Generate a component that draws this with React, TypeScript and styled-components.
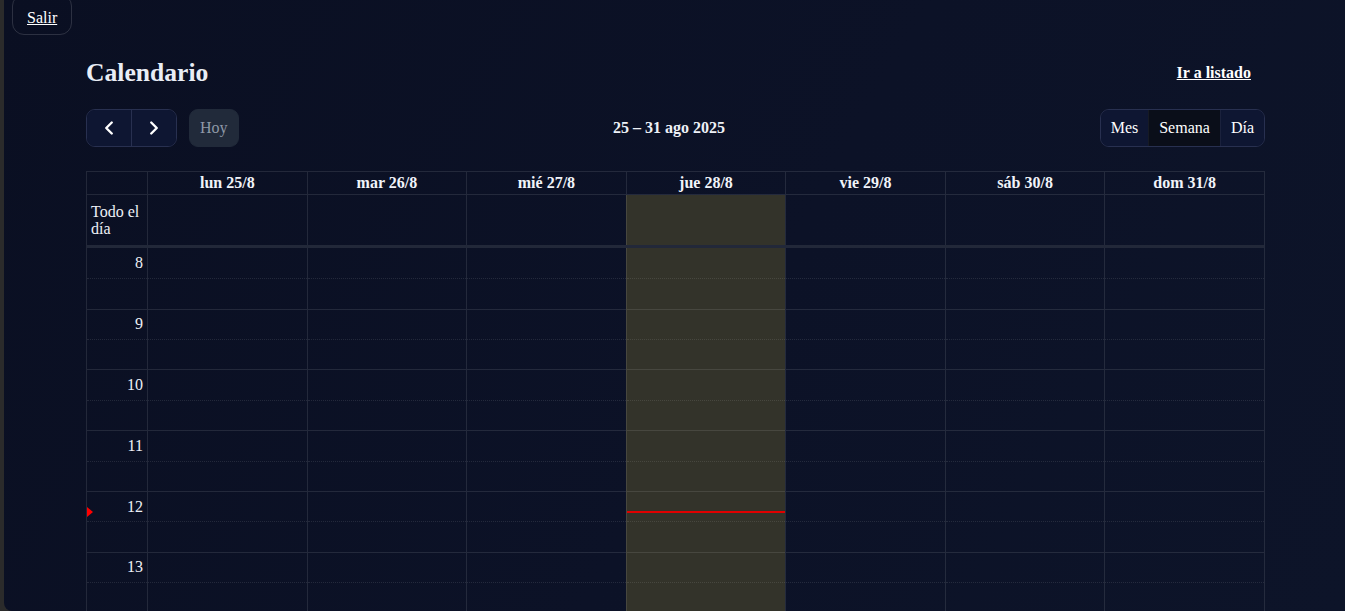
import React from 'react';
import styled, { createGlobalStyle } from 'styled-components';
import { ChevronLeft, ChevronRight } from 'lucide-react';

const LINE = 'rgba(255,255,255,0.1)';

const GlobalStyle = createGlobalStyle`
  html, body { margin: 0; padding: 0; height: 100%; overflow: hidden; background: #2b2b2b; }
  body { font-family: "Liberation Serif", "Times New Roman", serif; color: #eef1f7; }
  * { box-sizing: border-box; }
`;

const Shell = styled.div`
  margin-left: 4px;
  height: 611px;
  overflow: hidden;
  border-bottom-left-radius: 8px;
  background: linear-gradient(120deg, #0a0f22 0%, #0c1227 55%, #0d1429 100%);
  display: flex;
  flex-direction: column;
`;

const ExitButton = styled.a`
  align-self: flex-start;
  margin: -6px 0 0 8px;
  height: 41px;
  padding: 0 14px 7px;
  display: inline-flex;
  align-items: flex-end;
  border: 1px solid rgba(255, 255, 255, 0.14);
  border-radius: 12px;
  color: #ffffff;
  text-decoration: underline;
  font-size: 16px;
  line-height: 18px;
  cursor: pointer;
`;

const Main = styled.main`
  flex: 1;
  min-height: 0;
  display: flex;
  flex-direction: column;
  padding: 0 80px 0 82px;
`;

const TitleRow = styled.div`
  margin-top: 23px;
  height: 30px;
  display: flex;
  align-items: center;
  justify-content: space-between;
`;

const Title = styled.h1`
  margin: 0;
  font-size: 25.6px;
  line-height: 30px;
  font-weight: 700;
  color: #e9edf5;
`;

const ListLink = styled.a`
  padding: 0 14px;
  font-size: 16px;
  font-weight: 700;
  color: #ffffff;
  text-decoration: underline;
  cursor: pointer;
`;

const Toolbar = styled.div`
  margin-top: 21px;
  height: 38px;
  display: flex;
  justify-content: space-between;
  align-items: center;
`;

const ToolbarLeft = styled.div`
  display: flex;
  gap: 12px;
  align-items: center;
`;

const ButtonGroup = styled.div`
  display: flex;
  height: 38px;
  border: 1px solid #283050;
  border-radius: 9px;
  overflow: hidden;
`;

const NavButton = styled.button`
  width: 44px;
  height: 36px;
  border: none;
  background: #0e1632;
  color: #ffffff;
  display: flex;
  align-items: center;
  justify-content: center;
  padding: 0;
  cursor: pointer;
  & + & { border-left: 1px solid #283050; width: 45px; }
`;

const TodayButton = styled.button`
  height: 38px;
  padding: 0 10px;
  border: 1px solid #212a3a;
  border-radius: 9px;
  background: #212a3a;
  color: #8f98a7;
  font-family: inherit;
  font-size: 16px;
`;

const RangeLabel = styled.div`
  font-size: 16px;
  font-weight: 700;
  color: #eef1f7;
  text-align: center;
`;

const ViewButton = styled.button<{ $active?: boolean }>`
  height: 36px;
  padding: 0 10px;
  border: none;
  background: ${(p) => (p.$active ? '#0a0e19' : '#0e1632')};
  color: #ffffff;
  font-family: inherit;
  font-size: 16px;
  cursor: pointer;
  & + & { border-left: 1px solid rgba(255, 255, 255, 0.05); }
`;

const Calendar = styled.div`
  margin-top: 24px;
  border: 1px solid ${LINE};
  display: flex;
  flex-direction: column;
`;

const Row = styled.div`
  display: grid;
  grid-template-columns: 60px repeat(7, 1fr);
`;

const HeaderRow = styled(Row)`
  border-bottom: 1px solid ${LINE};
`;

const HeaderCell = styled.div`
  border-left: 1px solid ${LINE};
  padding: 2px 0;
  line-height: 18px;
  font-size: 16px;
  font-weight: 700;
  text-align: center;
  color: #f1f4fa;
`;

const AllDayRow = styled(Row)`
  height: 53px;
  border-bottom: 3px solid #222839;
`;

const AllDayLabel = styled.div`
  padding: 8px 4px;
  font-size: 16px;
  line-height: 17px;
  color: #eef1f7;
`;

const AllDayCell = styled.div<{ $today?: boolean }>`
  border-left: 1px solid ${LINE};
  background: ${(p) => (p.$today ? '#33332a' : 'transparent')};
`;

const TimeGrid = styled(Row)``;

const Column = styled.div<{ $today?: boolean; $gutter?: boolean }>`
  position: relative;
  border-left: ${(p) => (p.$gutter ? 'none' : `1px solid ${LINE}`)};
  background: ${(p) => (p.$today ? '#33332a' : 'transparent')};
`;

const HourGroup = styled.div`
  height: 60.8px;
  border-bottom: 1px solid ${LINE};
  display: flex;
  flex-direction: column;
  &:first-child { height: 61.6px; }
`;

const Slot = styled.div`
  flex: 1;
  & + & { border-top: 1px dotted ${LINE}; }
`;

const LabelSlot = styled(Slot)`
  display: flex;
  align-items: center;
  justify-content: flex-end;
  padding-right: 4px;
  font-size: 16px;
  color: #eef1f7;
`;

const NowLine = styled.div`
  position: absolute;
  left: 0;
  right: 0;
  height: 2px;
  background: #e00000;
`;

const NowMarker = styled.div`
  position: absolute;
  left: 0;
  width: 0;
  height: 0;
  border-top: 5px solid transparent;
  border-bottom: 5px solid transparent;
  border-left: 6px solid #ff0000;
`;

const days = ['lun 25/8', 'mar 26/8', 'mié 27/8', 'jue 28/8', 'vie 29/8', 'sáb 30/8', 'dom 31/8'];
const hours = Array.from({ length: 12 }, (_, i) => 8 + i);
const TODAY = 3;
const NOW_TOP = 264;

export default function App() {
  return (
    <>
      <GlobalStyle />
      <Shell>
        <ExitButton>Salir</ExitButton>
        <Main>
          <TitleRow>
            <Title>Calendario</Title>
            <ListLink>Ir a listado</ListLink>
          </TitleRow>
          <Toolbar>
            <ToolbarLeft>
              <ButtonGroup>
                <NavButton aria-label="Anterior">
                  <ChevronLeft size={22} strokeWidth={2.6} />
                </NavButton>
                <NavButton aria-label="Siguiente">
                  <ChevronRight size={22} strokeWidth={2.6} />
                </NavButton>
              </ButtonGroup>
              <TodayButton>Hoy</TodayButton>
            </ToolbarLeft>
            <RangeLabel>25 – 31 ago 2025</RangeLabel>
            <ButtonGroup>
              <ViewButton>Mes</ViewButton>
              <ViewButton $active>Semana</ViewButton>
              <ViewButton>Día</ViewButton>
            </ButtonGroup>
          </Toolbar>
          <Calendar>
            <HeaderRow>
              <div />
              {days.map((d) => (
                <HeaderCell key={d}>{d}</HeaderCell>
              ))}
            </HeaderRow>
            <AllDayRow>
              <AllDayLabel>Todo el día</AllDayLabel>
              {days.map((d, i) => (
                <AllDayCell key={d} $today={i === TODAY} />
              ))}
            </AllDayRow>
            <TimeGrid>
              <Column $gutter>
                {hours.map((h) => (
                  <HourGroup key={h}>
                    <LabelSlot>{h}</LabelSlot>
                    <Slot />
                  </HourGroup>
                ))}
                <NowMarker style={{ top: NOW_TOP - 5 }} />
              </Column>
              {days.map((d, i) => (
                <Column key={d} $today={i === TODAY}>
                  {hours.map((h) => (
                    <HourGroup key={h}>
                      <Slot />
                      <Slot />
                    </HourGroup>
                  ))}
                  {i === TODAY && <NowLine style={{ top: NOW_TOP - 1 }} />}
                </Column>
              ))}
            </TimeGrid>
          </Calendar>
        </Main>
      </Shell>
    </>
  );
}
